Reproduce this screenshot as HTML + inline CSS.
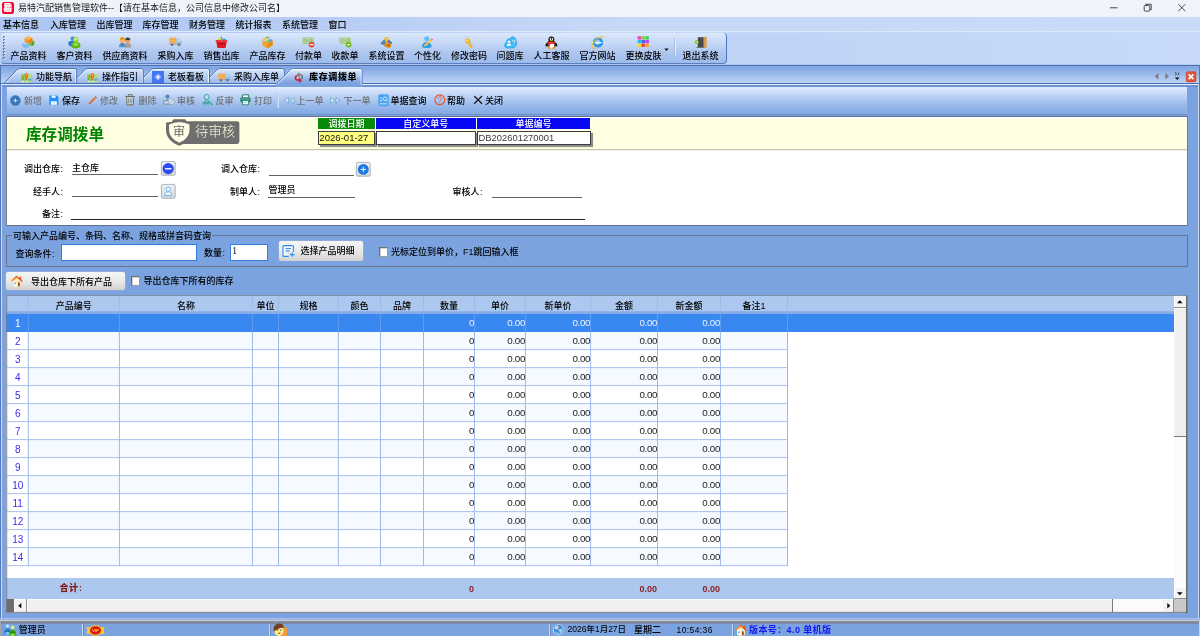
<!DOCTYPE html>
<html lang="zh-CN">
<head>
<meta charset="utf-8">
<title>易特汽配销售管理软件</title>
<style>
html,body{margin:0;padding:0;width:1200px;height:636px;overflow:hidden;background:#7ba3e0}
body{font:500 9px/11px "Liberation Sans","Noto Sans CJK SC",sans-serif;color:#000;position:relative}
#app{position:absolute;left:0;top:0;width:1200px;height:636px;overflow:hidden;will-change:transform}
.a,.t{position:absolute}
.t{white-space:nowrap;height:11px}
svg{position:absolute;overflow:visible}
#title{left:0;top:0;width:1200px;height:17px;background:#f0f3f9}
#menu{left:0;top:17px;width:1200px;height:16px;background:linear-gradient(90deg,#adc6f2 0,#b8cdf5 28%,#c5d7f7 48%,#cadbf8 100%)}
#tbwrap{left:0;top:33px;width:1200px;height:32px;background:linear-gradient(rgba(0,0,0,0) 0,rgba(0,0,0,0) 30.6px,rgba(120,150,210,0.25) 31.4px),linear-gradient(90deg,#bfd3f7 60%,#c8daf8 100%)}
#tb{left:1px;top:0;width:726px;height:31px;box-sizing:border-box;border-radius:3px 4px 4px 3px;background:linear-gradient(#deeafc 0,#d3e1f9 12%,#c7d9f6 32%,#b0c8f0 62%,#9dbbea 100%);border-bottom:1px solid #5a7fc0;border-right:1px solid #4a74c4}
#tb .t{text-align:center}
#tabs{left:0;top:65px;width:1200px;height:18px;background:linear-gradient(#4e70b0 0,#4e70b0 1px,#82a8e2 1px,#86abe3 4px,#a4c1ed 11px,#bad1f5 17px,#c4d8f8 18px)}
#sub{left:7px;top:87px;width:1180px;height:28px;background:linear-gradient(#e3eefd 0,#d2e1f9 3.5px,#c0d5f5 8px,#a8c4ee 14.5px,#8fb2e8 22px,#84aae4 26.9px,#6e8fc6 27px,#6e8fc6 28px)}
.g{color:#6e737a}
.co{display:inline-block;width:4.5px;text-align:left;text-indent:0.6px}
#panel{left:6px;top:116px;width:1182px;height:110px;background:#fff;border:1px solid #7b7d84;border-top-color:#64718c;border-bottom-color:#64718c;box-sizing:border-box}
#yellow{left:0;top:1px;width:1180px;height:33px;background:linear-gradient(#fffff4 0,#fffff4 1px,#ffffe1 1px,#ffffe1 31px,#c6c3b0 31px,#c6c3b0 32px,#f3f2e6 32px)}
.hd{color:#fff;text-align:center;line-height:12.6px;font-size:9px;overflow:hidden}
.in{box-sizing:border-box;border:1px solid #3c3c3c;box-shadow:1.6px 1.6px 0.6px #8f8f8a;line-height:12.4px;font-size:9.6px;padding-left:0.3px;color:#161616;white-space:nowrap}
.ul{position:absolute;height:1px;background:#636363}
.lb{position:absolute;white-space:nowrap;height:11px;text-align:right}
.btn{box-sizing:border-box;background:linear-gradient(#f6f6f6,#e9e9e9 50%,#d2d2d2);border-radius:2px;box-shadow:0 0 0 0.5px #9fb4d8}
.cb{width:9.5px;height:9.5px;box-sizing:border-box;background:#fff;border:1px solid #9a9a9a;border-top-color:#6e6e6e;border-left-color:#6e6e6e;box-shadow:inset 0.6px 0.6px 0 #b0b0b0}
#grid{left:6px;top:295px;width:1182px;height:318px;background:#fff;overflow:hidden}
#gh{left:0;top:0;width:1168px;height:18.7px;background:linear-gradient(#adc8ee 0,#adc8ee 15.6px,#8cb0e8 16.6px,#84aae7 18.7px)}
.h{position:absolute;top:6.1px;height:11px;text-align:center;line-height:11px;font-size:9px}
.row{position:absolute;left:0;width:781.9px;height:18.5px;background:#fff}
.row.alt{background:#f4faff}
.row.sel{background:#3987f0;width:1168px}
.c{position:absolute;top:0;height:18px;text-align:right;line-height:18.6px;color:#1c1c1c;font-size:9.8px;letter-spacing:-0.35px}
.c.n{color:#3a2cf0;text-align:center;font-size:10px;line-height:19.2px;letter-spacing:0;background:#fff}
.row.sel .c{color:#e8f0ff}
.row.sel .c.n{color:#fff;background:none}
#gf{left:0;top:282.9px;width:1168px;height:21.3px;background:#adc8ee}
#status{left:0;top:618px;width:1200px;height:18px;background:linear-gradient(#a6c1ee 0,#a6c1ee 1px,#9bb1d7 1px,#9bb1d7 2px,#c5ccdb 2px,#c5ccdb 3px,#8c8c8c 3px,#8c8c8c 4px,#7588ab 4px,#7588ab 5px,#7f8ba1 5px,#7f8ba1 5.600px,#7ba3e0 6px)}
</style>
</head>
<body>
<div id="app">
<div id="title" class="a">
<div class="a" style="left:1.5px;top:2px;width:12.200px;height:12.200px;border-radius:2.200px;background:#ee0a2c"></div><div class="a" style="left:3.5px;top:4.2px;width:8.200px;height:7.800px;background:rgba(255,255,255,0.5)"></div><div class="t" style="left:3.1px;top:2.6px;font-size:9px;line-height:11px;color:#fff;font-weight:900">易</div>
<div class="t" style="left:18px;top:3px;color:#1a1a1a;font-weight:400">易特汽配销售管理软件--【请在基本信息，公司信息中修改公司名】</div>
<svg style="left:1107px;top:2px" width="90" height="12" viewBox="0 0 90 12"><path d="M3 5.8h7.5" stroke="#333" stroke-width="0.9" fill="none"/><rect x="37.2" y="3.5" width="5.6" height="5.6" rx="1" stroke="#333" stroke-width="0.9" fill="none"/><path d="M38.8 3.3v-1.1h5.4v5.4h-1.2" stroke="#333" stroke-width="0.9" fill="none"/><path d="M71.3 2.2l7 7M78.3 2.2l-7 7" stroke="#333" stroke-width="0.9" fill="none"/></svg>
</div>
<div id="menu" class="a">
<div class="t" style="left:3px;top:3px;">基本信息</div>
<div class="t" style="left:50px;top:3px;">入库管理</div>
<div class="t" style="left:96.5px;top:3px;">出库管理</div>
<div class="t" style="left:142.5px;top:3px;">库存管理</div>
<div class="t" style="left:189px;top:3px;">财务管理</div>
<div class="t" style="left:235.5px;top:3px;">统计报表</div>
<div class="t" style="left:282px;top:3px;">系统管理</div>
<div class="t" style="left:328.5px;top:3px;">窗口</div>
<div class="a" style="left:0;top:14px;width:1200px;height:1px;background:#dfe8f9"></div>
</div>
<div id="tbwrap" class="a"><div id="tb" class="a">
<svg style="left:1.7px;top:2.6px" width="3" height="26" viewBox="0 0 3 26"><rect x="0.2" y="0.20" width="1.5" height="1.5" fill="#2c3f68"/><rect x="1.1" y="1.10" width="1.2" height="1.1" fill="#f4f8ff"/><rect x="0.2" y="3.21" width="1.5" height="1.5" fill="#2c3f68"/><rect x="1.1" y="4.11" width="1.2" height="1.1" fill="#f4f8ff"/><rect x="0.2" y="6.22" width="1.5" height="1.5" fill="#2c3f68"/><rect x="1.1" y="7.12" width="1.2" height="1.1" fill="#f4f8ff"/><rect x="0.2" y="9.23" width="1.5" height="1.5" fill="#2c3f68"/><rect x="1.1" y="10.13" width="1.2" height="1.1" fill="#f4f8ff"/><rect x="0.2" y="12.24" width="1.5" height="1.5" fill="#2c3f68"/><rect x="1.1" y="13.14" width="1.2" height="1.1" fill="#f4f8ff"/><rect x="0.2" y="15.25" width="1.5" height="1.5" fill="#2c3f68"/><rect x="1.1" y="16.15" width="1.2" height="1.1" fill="#f4f8ff"/><rect x="0.2" y="18.26" width="1.5" height="1.5" fill="#2c3f68"/><rect x="1.1" y="19.16" width="1.2" height="1.1" fill="#f4f8ff"/><rect x="0.2" y="21.27" width="1.5" height="1.5" fill="#2c3f68"/><rect x="1.1" y="22.17" width="1.2" height="1.1" fill="#f4f8ff"/></svg>
<div class="t" style="left:9.5px;top:17.7px;width:36px;">产品资料</div>
<svg style="left:21.0px;top:3.2px" width="13" height="13" viewBox="0 0 13 13"><path d="M0.5 7.2l3.6-1.6 3.6 1.5v3.6l-3.6 1.8-3.6-1.7z" fill="#7cbcec"/><path d="M0.5 7.2l3.6 1.5 3.6-1.6-3.6-1.5z" fill="#a6d6f6"/><path d="M7.2 5.2l2.6-1.6 2.4 1.4v3.8l-2.6 1.5-2.4-1.2z" fill="#7fc43a"/><path d="M9.6 6.4l2.6-1.4v3.8l-2.6 1.5z" fill="#5aa21e"/><path d="M2.6 2.2l3.8-1.9 3.9 1.7v4l-3.9 1.8-3.8-1.7z" fill="#f39a22"/><path d="M2.6 2.2l3.8 1.7 3.9-1.9-3.9-1.7z" fill="#fbb85a"/><path d="M6.4 3.9l3.9-1.9v4l-3.9 1.8z" fill="#e8861a"/></svg>
<div class="t" style="left:55.5px;top:17.7px;width:36px;">客户资料</div>
<svg style="left:67.0px;top:3.2px" width="13" height="13" viewBox="0 0 13 13"><circle cx="4.6" cy="2.6" r="2.1" fill="#3d8fe0"/><ellipse cx="3.6" cy="7.6" rx="3.3" ry="2.8" fill="#2d78cf"/><circle cx="7.7" cy="3.7" r="2.7" fill="#8fd43a"/><ellipse cx="7.8" cy="9.3" rx="4.6" ry="3.3" fill="#5cb818"/><ellipse cx="7.7" cy="3.2" rx="1.5" ry="1.2" fill="#c4ee86"/><ellipse cx="7.8" cy="8.4" rx="2.6" ry="1.3" fill="#9fe04e"/></svg>
<div class="t" style="left:101.5px;top:17.7px;width:45px;">供应商资料</div>
<svg style="left:117.5px;top:3.2px" width="13" height="13" viewBox="0 0 13 13"><path d="M0 11.2c0-3 1.4-4.4 3.4-4.4s3.2 1.4 3.2 4.4z" fill="#3f9be8"/><path d="M5.4 11.4c0-3 1.4-4.4 3.4-4.4s3.4 1.4 3.4 4.4z" fill="#9a9a9a"/><circle cx="3.3" cy="4.4" r="2.5" fill="#f6b26a"/><path d="M0.7 4.2c0-2.2 1.2-3.2 2.7-3.2s2.6 1 2.6 2.6c-1.8 0-3.4-0.4-5.3 0.6z" fill="#d8a010"/><circle cx="8.7" cy="4.7" r="2.4" fill="#f39a58"/><path d="M6.2 4.4c0-2 1.2-3 2.6-3s2.6 1 2.6 2.8c-1.8-0.4-3.4-0.6-5.2 0.2z" fill="#333"/><path d="M3 7.2l0.5 3 0.5-3z" fill="#c03030"/><path d="M8.5 7.4l0.5 3 0.5-3z" fill="#e6c820"/></svg>
<div class="t" style="left:156.5px;top:17.7px;width:36px;">采购入库</div>
<svg style="left:168.0px;top:3.2px" width="13" height="13" viewBox="0 0 13 13"><rect x="0.3" y="1.6" width="7.2" height="6.2" rx="0.6" fill="#f6b45c"/><path d="M0.6 3.6h6.6M0.6 5.6h6.6" stroke="#e89a3a" stroke-width="0.5"/><path d="M7.6 2.8h3l1.8 2.6v2.4h-4.8z" fill="#86c0ee"/><path d="M8.6 3.6h1.6l1.2 1.8h-2.8z" fill="#d8ecfb"/><rect x="0.3" y="7.6" width="12.2" height="1" fill="#9aa3ae"/><circle cx="3" cy="8.8" r="1.3" fill="#6b7280"/><circle cx="10" cy="8.8" r="1.3" fill="#6b7280"/></svg>
<div class="t" style="left:202.5px;top:17.7px;width:36px;">销售出库</div>
<svg style="left:214.0px;top:3.2px" width="13" height="13" viewBox="0 0 13 13"><path d="M2 4.4c0.6-2 2-2.6 3.2-2.4l1.4 2.6z" fill="#f4d21c"/><path d="M6.8 4.4c0.4-1.8 2-2.6 4.2-1.2l0.6 1.6z" fill="#2aa6de"/><path d="M0.6 4.8c0-0.6 0.4-0.9 1-0.9h9.8c0.6 0 1 0.3 1 0.9v1.2h-11.8z" fill="#f0323a"/><path d="M1.4 6h10.2l-0.8 5.2c-0.1 0.6-0.5 0.9-1.1 0.9h-6.4c-0.6 0-1-0.3-1.1-0.9z" fill="#e01a24"/><path d="M2.6 7.8h7.8" stroke="#a80c14" stroke-width="1"/><rect x="5.8" y="0.4" width="1.4" height="5.6" rx="0.6" fill="#8a8f98"/></svg>
<div class="t" style="left:248.5px;top:17.7px;width:36px;">产品库存</div>
<svg style="left:260.0px;top:3.2px" width="13" height="13" viewBox="0 0 13 13"><path d="M1.4 4.2l5 2.4 5.2-2.2v5l-5.2 3-5-2.8z" fill="#f2a431"/><path d="M6.4 6.6l5.2-2.2v5l-5.2 3z" fill="#e58e1c"/><path d="M1.2 3.4l2.6-1.3 2.6 1.1-2.6 1.4z" fill="#f8bf3e"/><path d="M3.9 1.6l2.6-1.2 2.6 1.1-2.6 1.3z" fill="#7cc63c"/><path d="M6.6 4.2l2.6-1.3 2.6 1.1-2.6 1.4z" fill="#3aa0ea"/><path d="M3.8 5.4l2.6-1.3 2.6 1.2-2.6 1.4z" fill="#8fd04e"/></svg>
<div class="t" style="left:294.0px;top:17.7px;width:27px;">付款单</div>
<svg style="left:301.0px;top:3.2px" width="13" height="13" viewBox="0 0 13 13"><rect x="0.4" y="1.4" width="11.4" height="6.6" rx="0.8" fill="#a4c98a"/><rect x="1.2" y="2.2" width="9.8" height="5" fill="#b9d8a2"/><circle cx="3.4" cy="4.7" r="1.4" fill="none" stroke="#86ad6c" stroke-width="0.6"/><path d="M6 3.4v2.6M8 3.4h2v2.6h-2z" stroke="#86ad6c" stroke-width="0.6" fill="none"/><circle cx="9.6" cy="8.6" r="2.9" fill="#e84a3a"/><rect x="7.8" y="8.1" width="3.6" height="1.1" fill="#fff"/></svg>
<div class="t" style="left:330.5px;top:17.7px;width:27px;">收款单</div>
<svg style="left:337.5px;top:3.2px" width="13" height="13" viewBox="0 0 13 13"><rect x="0.4" y="1.4" width="11.4" height="6.6" rx="0.8" fill="#a4c98a"/><rect x="1.2" y="2.2" width="9.8" height="5" fill="#b9d8a2"/><circle cx="3.4" cy="4.7" r="1.4" fill="none" stroke="#86ad6c" stroke-width="0.6"/><path d="M6 3.4v2.6M8 3.4h2v2.6h-2z" stroke="#86ad6c" stroke-width="0.6" fill="none"/><circle cx="9.6" cy="8.6" r="2.9" fill="#6cb81e"/><path d="M7.8 7.9h3.6l-1.8 1.9z" fill="#fff"/></svg>
<div class="t" style="left:367.5px;top:17.7px;width:36px;">系统设置</div>
<svg style="left:379.0px;top:3.2px" width="13" height="13" viewBox="0 0 13 13"><path d="M0.4 7.2l6-5.8 6 5.6-2 1.8h-7.6z" fill="#3e6aa8"/><path d="M0.4 7.2l6-5.8v4l-3.4 3.4z" fill="#5a86c0"/><circle cx="6.6" cy="3" r="2.2" fill="#f4c430"/><path d="M5.6 4.6h2l0.6 3.4h-3.2z" fill="#e8a820"/><circle cx="8.6" cy="9.2" r="2.6" fill="#e88a1a"/><circle cx="8.6" cy="9.2" r="1" fill="#8a5a1a"/><path d="M4.4 8.4h3v2.4h-3z" fill="#d88a1a"/></svg>
<div class="t" style="left:413.0px;top:17.7px;width:27px;">个性化</div>
<svg style="left:420.0px;top:3.2px" width="13" height="13" viewBox="0 0 13 13"><circle cx="5.8" cy="2.8" r="2.5" fill="#5cc0f4"/><path d="M1 11c0-3.4 2.2-5 4.8-5s4.8 1.6 4.8 5c-1.6 1.4-8 1.4-9.600 0z" fill="#2f9be8"/><path d="M3.6 8.6l6.200-5.6 1.400 1.400-6.200 5.600-1.800 0.400z" fill="#f4c64a"/><path d="M9.800 3l0.900-0.800 1.400 1.400-0.900 0.800z" fill="#ee6a6a"/></svg>
<div class="t" style="left:450.0px;top:17.7px;width:36px;">修改密码</div>
<svg style="left:461.5px;top:3.2px" width="13" height="13" viewBox="0 0 13 13"><circle cx="3.2" cy="2.600" r="2.200" fill="none" stroke="#c8ccd2" stroke-width="0.9"/><path d="M6.400 4.600l4.800 5.400-0.600 1-1.600-0.400-3.600-4.600z" fill="#c4c8ce"/><path d="M2.200 4.200c0.400-1.800 2.800-2.400 4.200-1.200 1 0.900 1 2.400 0.400 3.400l2.800 5.200-1.400 0.800-1-0.800-0.200-1.400-1.200-0.400-0.600-2c-2-0.200-3.400-1.600-3-3.600z" fill="#f4b41e"/><circle cx="4.200" cy="4.400" r="0.800" fill="#fff4c8"/></svg>
<div class="t" style="left:495.5px;top:17.7px;width:27px;">问题库</div>
<svg style="left:502.5px;top:3.2px" width="13" height="13" viewBox="0 0 13 13"><path d="M3.400 12.400c-2 0-3.200-1.400-3.200-3.200 0-1.400 0.800-2.400 1.800-2.900 0-2.600 1.800-4.300 4-4.300 0.800-1.200 2-1.800 3.200-1.600 2 0.300 3.400 2 3.400 4.200 0.400 0.700 0.600 1.500 0.600 2.400 0 2.800-2 5.400-5 5.400z" fill="#3fb4f2"/><circle cx="5" cy="5.800" r="1.300" fill="#fff"/><path d="M2.800 9.800c0-1.600 1-2.400 2.200-2.400s2.200 0.800 2.200 2.400z" fill="#fff"/><path d="M8.400 5.400c0-1 0.600-1.400 1.300-1.400 0.800 0 1.300 0.500 1.300 1.200 0 1-1.200 1-1.200 2.200" stroke="#fff" stroke-width="0.8" fill="none"/><circle cx="9.800" cy="9" r="0.500" fill="#fff"/></svg>
<div class="t" style="left:532.5px;top:17.7px;width:36px;">人工客服</div>
<svg style="left:544.0px;top:3.2px" width="13" height="13" viewBox="0 0 13 13"><ellipse cx="6.400" cy="8.200" rx="4.400" ry="3.800" fill="#1a1a1a"/><ellipse cx="1.600" cy="8.600" rx="1" ry="2" fill="#1a1a1a" transform="rotate(20 1.600 8.600)"/><ellipse cx="11.200" cy="8.600" rx="1" ry="2" fill="#1a1a1a" transform="rotate(-20 11.200 8.600)"/><ellipse cx="6.400" cy="9" rx="3" ry="3.200" fill="#fff"/><ellipse cx="6.400" cy="3.400" rx="3" ry="3" fill="#1a1a1a"/><path d="M2.600 5.600c2.400 1.200 5.200 1.200 7.600 0l0.400 1.600c-2.800 1.200-5.600 1.200-8.400 0z" fill="#e8281e"/><path d="M3.400 6.800l1.800 0.400-0.400 3.200-1.800-0.400z" fill="#e8281e"/><ellipse cx="5.400" cy="2.900" rx="0.700" ry="1" fill="#fff"/><ellipse cx="7.400" cy="2.900" rx="0.700" ry="1" fill="#fff"/><ellipse cx="6.400" cy="4.700" rx="1.600" ry="0.600" fill="#f4a81e"/><ellipse cx="3.800" cy="12" rx="2" ry="0.900" fill="#f4a81e"/><ellipse cx="9" cy="12" rx="2" ry="0.900" fill="#f4a81e"/></svg>
<div class="t" style="left:578.5px;top:17.7px;width:36px;">官方网站</div>
<svg style="left:590.0px;top:3.2px" width="13" height="13" viewBox="0 0 13 13"><circle cx="7" cy="6.400" r="5" fill="#2a96e8"/><circle cx="7" cy="6.400" r="2.400" fill="#9ad4f8"/><path d="M4 6h6.800v1.600h-6.800z" fill="#e8f6ff"/><path d="M8 7.600h3.800c-0.400 1.600-1.600 3-3.400 3.600z" fill="#2a96e8"/><path d="M1.400 11.800c-1.800-2.400 2.400-8.400 7.600-10.600 1.800-0.800 3.200-0.600 3.600 0.400" stroke="#f4be2a" stroke-width="1.100" fill="none"/><path d="M1.400 11.800c0.800 0.800 2.600 0.400 4-0.400" stroke="#e8a81e" stroke-width="1" fill="none"/></svg>
<div class="t" style="left:624.5px;top:17.7px;width:36px;">更换皮肤</div>
<svg style="left:636.0px;top:3.2px" width="13" height="13" viewBox="0 0 13 13"><rect x="0.6" y="0.2" width="3.500" height="3.300" fill="#ee44c4"/><rect x="4.5" y="0.2" width="3.500" height="3.300" fill="#8ccc2a"/><rect x="8.4" y="0.2" width="3.500" height="3.300" fill="#30d46a"/><rect x="0.6" y="3.9" width="3.500" height="3.300" fill="#2ab8f4"/><rect x="4.5" y="3.9" width="3.500" height="3.300" fill="#4a64e8"/><rect x="8.4" y="3.9" width="3.500" height="3.300" fill="#c43af0"/><rect x="0.6" y="7.6" width="3.500" height="3.300" fill="#f8d432"/><rect x="4.5" y="7.6" width="3.500" height="3.300" fill="#f04a3a"/><rect x="8.4" y="7.6" width="3.500" height="3.300" fill="#f8a828"/></svg>
<div class="t" style="left:681.5px;top:17.7px;width:36px;">退出系统</div>
<svg style="left:693.0px;top:3.2px" width="13" height="13" viewBox="0 0 13 13"><rect x="3.800" y="1.200" width="6" height="10" fill="#4a4a4a"/><path d="M9.800 1.200l2.600-0.800v11l-2.600-0.200z" fill="#d89a48"/><rect x="2.400" y="11" width="8" height="0.900" fill="#6a6a6a"/><path d="M9.800 1.200l2.600-0.800v11l-2.600-0.200z" fill="#d89a48"/><circle cx="2.600" cy="6.200" r="1.900" fill="#7cc81e"/><path d="M1.600 6.200h2.600l-1-1M4.200 6.200l-1 1" stroke="#d8f4a0" stroke-width="0.500" fill="none"/></svg>
<svg style="left:662.6px;top:15.2px" width="6" height="4" viewBox="0 0 6 4"><path d="M0.3 0.5h4.4l-2.2 2.6z" fill="#111"/></svg>
<div class="a" style="left:673px;top:4.5px;width:1px;height:18px;background:#a9bfe6"></div><div class="a" style="left:674px;top:4.5px;width:1px;height:18px;background:#e3ecfb"></div>
</div></div>
<div id="tabs" class="a">
<svg style="left:0px;top:0px" width="1200" height="22" viewBox="0 0 1200 22"><defs><linearGradient id="ti" x1="0" y1="0" x2="0" y2="1"><stop offset="0" stop-color="#dbe7fa"/><stop offset="0.45" stop-color="#bdd2f4"/><stop offset="1" stop-color="#9bb9ea"/></linearGradient><linearGradient id="ta" gradientUnits="userSpaceOnUse" x1="0" y1="3.5" x2="0" y2="22"><stop offset="0" stop-color="#f2f6fe"/><stop offset="0.25" stop-color="#c4d7f6"/><stop offset="0.62" stop-color="#8fb2e7"/><stop offset="0.8" stop-color="#7ba3e0"/><stop offset="1" stop-color="#7ba3e0"/></linearGradient></defs><rect x="0" y="18" width="1200" height="1" fill="#4a70b4"/><rect x="0" y="19" width="1200" height="1" fill="#e2ebfb"/><rect x="0" y="20" width="1200" height="2" fill="#7099da"/><rect x="0" y="21.300" width="1200" height="0.700" fill="#6088cc"/><path d="M204.2 18.0 L216.1 5.6 Q217.5 3.5 220.1 3.5 L282.3 3.5 Q284.3 3.5 284.3 5.5 L284.3 18.0 Z" fill="url(#ti)"/><path d="M205.7 18.0 L216.89999999999998 6.1 Q218.1 4.5 220.1 4.5 L282.3 4.5 Q283.3 4.5 283.3 5.9 L283.3 18.0" fill="none" stroke="#eef4fe" stroke-width="0.9"/><path d="M204.2 18.0 L216.1 5.6 Q217.5 3.5 220.1 3.5 L282.3 3.5 Q284.3 3.5 284.3 5.5 L284.3 18.0" fill="none" stroke="#4a72ba" stroke-width="1"/><path d="M138.2 18.0 L150.1 5.6 Q151.5 3.5 154.1 3.5 L207.5 3.5 Q209.5 3.5 209.5 5.5 L209.5 18.0 Z" fill="url(#ti)"/><path d="M139.7 18.0 L150.89999999999998 6.1 Q152.1 4.5 154.1 4.5 L207.5 4.5 Q208.5 4.5 208.5 5.9 L208.5 18.0" fill="none" stroke="#eef4fe" stroke-width="0.9"/><path d="M138.2 18.0 L150.1 5.6 Q151.5 3.5 154.1 3.5 L207.5 3.5 Q209.5 3.5 209.5 5.5 L209.5 18.0" fill="none" stroke="#4a72ba" stroke-width="1"/><path d="M72.0 18.0 L83.9 5.6 Q85.3 3.5 87.9 3.5 L141.3 3.5 Q143.3 3.5 143.3 5.5 L143.3 18.0 Z" fill="url(#ti)"/><path d="M73.5 18.0 L84.7 6.1 Q85.9 4.5 87.9 4.5 L141.3 4.5 Q142.3 4.5 142.3 5.9 L142.3 18.0" fill="none" stroke="#eef4fe" stroke-width="0.9"/><path d="M72.0 18.0 L83.9 5.6 Q85.3 3.5 87.9 3.5 L141.3 3.5 Q143.3 3.5 143.3 5.5 L143.3 18.0" fill="none" stroke="#4a72ba" stroke-width="1"/><path d="M4.3 18.0 L16.2 5.6 Q17.6 3.5 20.2 3.5 L74.7 3.5 Q76.7 3.5 76.7 5.5 L76.7 18.0 Z" fill="url(#ti)"/><path d="M5.8 18.0 L17.0 6.1 Q18.2 4.5 20.2 4.5 L74.7 4.5 Q75.7 4.5 75.7 5.9 L75.7 18.0" fill="none" stroke="#eef4fe" stroke-width="0.9"/><path d="M4.3 18.0 L16.2 5.6 Q17.6 3.5 20.2 3.5 L74.7 3.5 Q76.7 3.5 76.7 5.5 L76.7 18.0" fill="none" stroke="#4a72ba" stroke-width="1"/><path d="M276.0 22 L276.0 19.6 L289.5 5.6 Q290.90000000000003 3.5 293.5 3.5 L360.2 3.5 Q362.2 3.5 362.2 5.5 L362.2 22 Z" fill="url(#ta)"/><path d="M277.40000000000003 19.4 L290.3 6.1 Q291.5 4.5 293.5 4.5 L360.2 4.5 Q361.2 4.5 361.2 5.9 L361.2 19.4" fill="none" stroke="#fdfeff" stroke-width="0.9"/><path d="M276.20000000000005 19.2 L289.5 5.6 Q290.90000000000003 3.5 293.5 3.5 L360.2 3.5 Q362.2 3.5 362.2 5.5 L362.2 18.6" fill="none" stroke="#5a80c4" stroke-width="1"/></svg>
<div class="t" style="left:36px;top:6.5px;">功能导航</div>
<div class="t" style="left:102px;top:6.5px;">操作指引</div>
<div class="t" style="left:168px;top:6.5px;">老板看板</div>
<div class="t" style="left:234px;top:6.5px;">采购入库单</div>
<div class="t" style="left:309px;top:6.5px;font-weight:900;color:#000;letter-spacing:0.65px">库存调拨单</div>
<svg style="left:20.5px;top:6.5px" width="11" height="11" viewBox="0 0 11 11"><rect x="0.300" y="2.400" width="10.400" height="7.800" rx="0.600" fill="#a8d45a"/><rect x="0.300" y="2.400" width="3.200" height="7.800" fill="#8cc63c"/><rect x="7" y="2.400" width="3.700" height="7.800" fill="#b8de78"/><rect x="6.600" y="6.600" width="4.100" height="2" fill="#58aee8"/><rect x="0.300" y="8.600" width="6.200" height="1.600" fill="#e8ecd8"/><path d="M1.200 8.400l1.400-4M4 9.800l0.800-3.600" stroke="#5a9a2a" stroke-width="0.800"/><path d="M5.400 8l-1.700-3.800c-0.500-1.800 0.500-3.300 1.700-3.300s2.200 1.500 1.700 3.300z" fill="#f06a1e"/><circle cx="5.400" cy="3" r="0.700" fill="#ffd8b0"/></svg>
<svg style="left:86.5px;top:6.5px" width="11" height="11" viewBox="0 0 11 11"><rect x="0.300" y="2.400" width="10.400" height="7.800" rx="0.600" fill="#a8d45a"/><rect x="0.300" y="2.400" width="3.200" height="7.800" fill="#8cc63c"/><rect x="7" y="2.400" width="3.700" height="7.800" fill="#b8de78"/><rect x="6.600" y="6.600" width="4.100" height="2" fill="#58aee8"/><rect x="0.300" y="8.600" width="6.200" height="1.600" fill="#e8ecd8"/><path d="M1.200 8.400l1.400-4M4 9.800l0.800-3.600" stroke="#5a9a2a" stroke-width="0.800"/><path d="M5.400 8l-1.700-3.800c-0.500-1.800 0.500-3.300 1.700-3.300s2.200 1.500 1.700 3.300z" fill="#f06a1e"/><circle cx="5.400" cy="3" r="0.700" fill="#ffd8b0"/></svg>
<svg style="left:152.4px;top:5.5px" width="12" height="12" viewBox="0 0 12 12"><rect x="0" y="0" width="12" height="12" fill="#3f76f6"/><path d="M6 2.200l3.600 3.800-3.600 3.800-3.600-3.800z" fill="#8fb0fb"/><path d="M6 3.800l2 2.200-2 2.200-2-2.200z" fill="#c8d8fe"/><circle cx="6" cy="6" r="0.900" fill="#fff"/></svg>
<svg style="left:218px;top:6px" width="12" height="12" viewBox="0 0 12 12"><rect x="0.300" y="2.400" width="7" height="5.800" rx="0.500" fill="#f6b45c"/><path d="M0.500 4.200h6.600M0.500 6h6.600" stroke="#e89a3a" stroke-width="0.500"/><path d="M7.400 3.400h2.800l1.700 2.400v2.400h-4.500z" fill="#86c0ee"/><path d="M8.300 4.200h1.500l1.100 1.600h-2.600z" fill="#d8ecfb"/><rect x="0.300" y="8" width="11.600" height="0.900" fill="#9aa3ae"/><circle cx="2.900" cy="9.200" r="1.200" fill="#6b7280"/><circle cx="9.600" cy="9.200" r="1.200" fill="#6b7280"/></svg>
<svg style="left:293px;top:5.6px" width="12" height="13" viewBox="0 0 12 13"><path d="M6.400 3.200c2-0.600 3.800 0.600 3.800 2.600 0 1.400-0.800 2.400-2 2.800l-0.400-1.600c0.600-0.300 0.800-0.700 0.800-1.300 0-0.800-0.800-1.300-2.200-1v1.700l-2.800-2.600 2.800-2.800z" fill="#7a7a7a"/><path d="M6 9.800c-2.200 0.600-4.400-0.600-4.400-2.800 0-1.400 0.800-2.600 2-3l0.600 1.600c-0.600 0.300-0.900 0.800-0.900 1.400 0 1 1 1.600 2.700 1.200v-1.800l3 2.800-3 3z" fill="#e01a20"/></svg>
<svg style="left:1150px;top:5px" width="50" height="14" viewBox="0 0 50 14"><path d="M8.400 3v6.600l-3.600-3.300z" fill="#7c7c80"/><path d="M15.400 3v6.600l3.600-3.300z" fill="#7c7c80"/><path d="M25 2.3l1.6 1.5-1.6 1.5M27.6 2.3l1.6 1.5-1.6 1.5" stroke="#222" stroke-width="0.8" fill="none"/><path d="M24.8 7.5h4.8l-2.4 2.4z" fill="#111"/><rect x="36.200" y="1.700" width="9.800" height="10.200" rx="1.200" fill="#e0543a" stroke="#c8432c" stroke-width="0.600"/><path d="M38.6 4.4l4.8 4.8M43.4 4.4l-4.8 4.8" stroke="#fff" stroke-width="1.7" fill="none"/></svg>
</div>
<div class="a" style="left:0;top:65px;width:1px;height:554.5px;background:#5577b5"></div><div class="a" style="left:1px;top:84px;width:1px;height:535px;background:#cddbf5"></div>
<div class="a" style="left:1199px;top:65px;width:1px;height:554.5px;background:#5577b5"></div><div class="a" style="left:1198px;top:84px;width:1px;height:535px;background:#cddbf5"></div>
<div id="sub" class="a">
<div class="t g" style="left:17px;top:9px;">新增</div>
<svg style="left:3.3px;top:7.5px" width="11" height="11" viewBox="0 0 11 11"><circle cx="5.400" cy="5.500" r="5.200" fill="#3576b8"/><circle cx="5.400" cy="5.500" r="4.700" fill="none" stroke="#5a90c8" stroke-width="0.900" stroke-dasharray="1.100 1.100"/><path d="M5.400 3.400v4.200M3.300 5.500h4.200" stroke="#b4d0ee" stroke-width="1.200"/><circle cx="5.400" cy="5.500" r="0.700" fill="#e8f2fc"/></svg>
<div class="t" style="left:55px;top:9px;">保存</div>
<svg style="left:42px;top:8.4px" width="10" height="10" viewBox="0 0 10 10"><path d="M0.300 0.600h7.700l1.400 1.500v7.700h-9.100z" fill="#1e90ff"/><rect x="2.600" y="0.600" width="4" height="2.300" fill="#eaf4ff"/><rect x="1.900" y="6.300" width="5.900" height="3.400" fill="#fff"/><rect x="3" y="7.600" width="3.600" height="0.600" fill="#9ac4f0"/></svg>
<div class="t g" style="left:93px;top:9px;">修改</div>
<svg style="left:80.8px;top:8.7px" width="9.2" height="9.2" viewBox="0 0 11 11"><path d="M1 9.600l0.600-2.200 5.800-5.800 1.800 1.800-5.800 5.800z" fill="#e0703a"/><path d="M7.800 1.200l0.700-0.700c0.300-0.300 0.700-0.300 1 0l0.800 0.800c0.300 0.300 0.300 0.700 0 1l-0.700 0.700z" fill="#c85a28"/><path d="M1 9.600l0.400-1.400 1.100 1.100z" fill="#a8481e"/></svg>
<div class="t g" style="left:131.5px;top:9px;">删除</div>
<svg style="left:118px;top:7.0px" width="11" height="12" viewBox="0 0 11 12"><path d="M3.400 1.900v-1.300h3.600v1.300" stroke="#6a6a5a" stroke-width="0.900" fill="none"/><rect x="0.500" y="1.900" width="9.400" height="1.300" fill="#6a6a5a"/><path d="M1.600 3.400l0.500 7.400h6.200l0.500-7.400" stroke="#6f6f62" stroke-width="1" fill="rgba(255,255,255,0.450)"/><path d="M3.600 4.400v5M5.200 4.400v5M6.800 4.400v5" stroke="#77776a" stroke-width="0.800"/><rect x="2" y="10.400" width="6.400" height="1" fill="#8a8a7a"/></svg>
<div class="t g" style="left:170px;top:9px;">审核</div>
<svg style="left:156px;top:7.2px" width="12" height="11" viewBox="0 0 12 11"><circle cx="4.400" cy="2.500" r="2.100" fill="#5a82bc"/><path d="M3.700 4.200h1.400v2.200h-1.400z" fill="#8a94a8"/><path d="M0.600 6.600h6.800v3.600h-6.800z" fill="rgba(255,255,255,0.250)" stroke="#868b94" stroke-width="0.900"/><circle cx="8.300" cy="7.600" r="2.800" fill="#e8eff8" stroke="#8f99a8" stroke-width="0.700"/><path d="M7.100 8.800l2.300-2.400" stroke="#4a9f84" stroke-width="1"/></svg>
<div class="t g" style="left:208.5px;top:9px;">反审</div>
<svg style="left:195px;top:6.7px" width="11" height="12" viewBox="0 0 11 12"><circle cx="4.600" cy="3" r="2.500" fill="rgba(255,255,255,0.200)" stroke="#2aa898" stroke-width="1"/><path d="M3.600 5.500l-1 2.700h4l-1-2.700" stroke="#2aa898" stroke-width="0.900" fill="none"/><rect x="0.400" y="8.400" width="6.800" height="1.300" fill="#3a9a8a"/><rect x="0.400" y="10.500" width="6.800" height="0.800" fill="#4ab4a4"/><path d="M7 7.400l3.400 3.600" stroke="#2aa898" stroke-width="1.100"/></svg>
<div class="t g" style="left:247px;top:9px;">打印</div>
<svg style="left:233px;top:7.4px" width="11" height="11" viewBox="0 0 11 11"><path d="M2.400 3.400v-2.600h6.200v2.600" stroke="#2a8474" stroke-width="1" fill="#eef6f3"/><rect x="0.300" y="3.200" width="10.400" height="5" rx="1.300" fill="#2f8676"/><rect x="1.600" y="4.300" width="7.800" height="1.300" fill="#5aa696"/><rect x="2.600" y="6.400" width="5.800" height="4.400" fill="#f0f8f6" stroke="#2a8474" stroke-width="0.900"/><path d="M3.800 8.400h3.400" stroke="#6ab0a0" stroke-width="0.600"/></svg>
<div class="t g" style="left:289.5px;top:9px;">上一单</div>
<svg style="left:276.5px;top:7.7px" width="11" height="11" viewBox="0 0 11 11"><path d="M4.600 2.600v5.600l-4-2.800z" fill="#dfeafa" stroke="#6a9ad0" stroke-width="0.700"/><path d="M10 2.600v5.600l-4-2.800z" fill="#dfeafa" stroke="#4ab0a0" stroke-width="0.700"/></svg>
<div class="t g" style="left:336.5px;top:9px;">下一单</div>
<svg style="left:323px;top:7.7px" width="11" height="11" viewBox="0 0 11 11"><path d="M0.600 2.600v5.600l4-2.800z" fill="#dfeafa" stroke="#4ab0a0" stroke-width="0.700"/><path d="M6 2.600v5.600l4-2.800z" fill="#dfeafa" stroke="#4a8ad0" stroke-width="0.700"/></svg>
<div class="t" style="left:383.5px;top:9px;">单据查询</div>
<svg style="left:370.5px;top:7.1px" width="11" height="12" viewBox="0 0 11 12"><rect x="0.300" y="0.200" width="10.600" height="12" rx="1.600" fill="#4aa4f0"/><path d="M1.800 4.200h2.400M1.800 6.600h2.400M1.800 9.800h7.200" stroke="#e8f4ff" stroke-width="0.800"/><circle cx="7.200" cy="4.800" r="1.900" fill="none" stroke="#e8f4ff" stroke-width="0.800"/><path d="M8.400 6.200l1.200 1.400" stroke="#e8f4ff" stroke-width="0.800"/></svg>
<div class="t" style="left:440px;top:9px;">帮助</div>
<svg style="left:426.8px;top:6.8px" width="12" height="12" viewBox="0 0 12 12"><circle cx="5.800" cy="5.800" r="4.900" fill="none" stroke="#f04a1e" stroke-width="1.100"/><path d="M4.200 4.600c0-1.200 0.800-1.700 1.700-1.700s1.600 0.600 1.600 1.500c0 1.200-1.500 1.300-1.500 2.600" stroke="#f04a1e" stroke-width="0.900" fill="none"/><circle cx="5.900" cy="8.400" r="0.600" fill="#f04a1e"/></svg>
<div class="t" style="left:478px;top:9px;">关闭</div>
<svg style="left:465.6px;top:7.9px" width="10" height="10" viewBox="0 0 10 10"><path d="M1.200 1l7.800 7.800M9 1l-7.800 7.800" stroke="#1c1c1c" stroke-width="1.300" fill="none"/></svg>
<div class="a" style="left:269.6px;top:6px;width:1px;height:15px;background:#b4c8ec"></div><div class="a" style="left:270.6px;top:6px;width:1px;height:15px;background:#d3e0f6"></div>
</div>
<div id="panel" class="a"><div id="yellow" class="a"></div>
<div class="t" style="left:19px;top:9px;font-size:15.6px;line-height:17px;height:17px;font-weight:bold;color:#008400">库存调拨单</div>
<svg style="left:158.8px;top:2px" width="74" height="27" viewBox="0 0 74 27"><rect x="13" y="2.2" width="60.4" height="22.8" rx="2.4" fill="#6e6e6e"/><path d="M7.400 0.300L19.200 0.300L20.800 2.800Q23.600 3.400 26.600 3.400L26.600 11C26.600 18 21.600 23.500 13.300 26.700C5 23.500 0 18 0 11L0 3.400Q3 3.400 5.800 2.800Z" fill="#6e6e6e"/><path d="M13.300 3Q18.400 3.400 23.500 5.600L23.500 11C23.500 16.800 19.400 21 13.300 23.700C7.200 21 3.100 16.800 3.100 11L3.100 5.600Q8.200 3.400 13.300 3Z" fill="#fffce6"/></svg><div class="t" style="left:166.10000000000002px;top:8.3px;font-size:12px;line-height:14px;height:14px;color:#6a6a6a;font-weight:400">审</div><div class="t" style="left:188.0px;top:7.2px;font-size:13.400px;line-height:16px;height:16px;color:#fffbdc;font-weight:300">待审核</div>
<div class="a hd" style="left:311px;top:0.6px;width:56.8px;height:11.3px;background:#0a8a0a">调拨日期</div>
<div class="a hd" style="left:369px;top:0.6px;width:99.5px;height:11.3px;background:#0808f4">自定义单号</div>
<div class="a hd" style="left:470.3px;top:0.6px;width:112.5px;height:11.3px;background:#0808f4">单据编号</div>
<div class="a in" style="left:311px;top:14.2px;width:57px;height:14.2px;background:#ffff80">2026-01-27</div>
<div class="a in" style="left:369.3px;top:14.2px;width:99.5px;height:14.2px;background:#fff"></div>
<div class="a in" style="left:470.3px;top:13.6px;width:113.5px;height:14.2px;background:#fff;font-size:9.4px;color:#3c3c3c;line-height:11.6px">DB202601270001</div>
<div class="lb" style="left:-22.5px;width:80px;top:47.2px">调出仓库<span class="co">:</span></div>
<div class="t" style="left:65px;top:46.2px;">主仓库</div>
<div class="ul" style="left:65px;top:57px;width:86px;height:1.2px"></div>
<svg style="left:154.2px;top:44px" width="14.6" height="14.6" viewBox="0 0 14.6 14.6"><defs><linearGradient id="sq1" x1="0" y1="0" x2="0" y2="1"><stop offset="0" stop-color="#f0f0f0"/><stop offset="1" stop-color="#d9d9d9"/></linearGradient></defs><rect x="0.400" y="0.400" width="13.800" height="13.800" rx="1.400" fill="url(#sq1)" stroke="#9aa3b0" stroke-width="0.800"/><circle cx="7.200" cy="7.600" r="5.600" fill="#2a4cf0"/><rect x="3.800" y="6.900" width="6.800" height="1.500" rx="0.700" fill="#e4ebff"/></svg>
<div class="lb" style="left:174.5px;width:80px;top:47px">调入仓库<span class="co">:</span></div>
<div class="ul" style="left:262px;top:57.5px;width:85px"></div>
<svg style="left:348.6px;top:44.8px" width="14.6" height="14.6" viewBox="0 0 14.6 14.6"><defs><linearGradient id="sq2" x1="0" y1="0" x2="0" y2="1"><stop offset="0" stop-color="#f0f0f0"/><stop offset="1" stop-color="#d9d9d9"/></linearGradient></defs><rect x="0.400" y="0.400" width="13.800" height="13.800" rx="1.400" fill="url(#sq2)" stroke="#9aa3b0" stroke-width="0.800"/><circle cx="7.300" cy="7.400" r="5.400" fill="#1a78e0"/><path d="M7.300 4.600v5.600M4.500 7.400h5.600" stroke="#eef5ff" stroke-width="1"/></svg>
<div class="lb" style="left:-22.5px;width:80px;top:69.5px">经手人<span class="co">:</span></div>
<div class="ul" style="left:65px;top:79px;width:86px;height:1.2px"></div>
<svg style="left:154.2px;top:66.7px" width="14.6" height="14.6" viewBox="0 0 14.6 14.6"><defs><linearGradient id="sq3" x1="0" y1="0" x2="0" y2="1"><stop offset="0" stop-color="#f0f0f0"/><stop offset="1" stop-color="#d9d9d9"/></linearGradient></defs><rect x="0.400" y="0.400" width="13.800" height="13.800" rx="1.400" fill="url(#sq3)" stroke="#9aa3b0" stroke-width="0.800"/><circle cx="7.300" cy="5.300" r="2.200" fill="#f4f8fc" stroke="#5ab0f0" stroke-width="0.900"/><path d="M3.600 11.600c0-2.600 1.400-3.800 3.700-3.800s3.700 1.200 3.700 3.800z" fill="#f4f8fc" stroke="#5ab0f0" stroke-width="0.900"/></svg>
<div class="lb" style="left:174.5px;width:80px;top:69.5px">制单人<span class="co">:</span></div>
<div class="t" style="left:261.5px;top:68px;">管理员</div>
<div class="ul" style="left:261px;top:79.5px;width:87px"></div>
<div class="lb" style="left:397px;width:80px;top:69.7px">审核人<span class="co">:</span></div>
<div class="ul" style="left:484.5px;top:79.5px;width:90px"></div>
<div class="lb" style="left:-22.5px;width:80px;top:92px">备注<span class="co">:</span></div>
<div class="ul" style="left:63.5px;top:102px;width:514px;background:#222"></div>
</div>
<div class="a" style="left:6px;top:235px;width:1181.5px;height:31.5px;box-sizing:border-box;border:1px solid #6a7389"></div>
<div class="a" style="left:12px;top:233px;width:200px;height:5px;background:#7ba3e0"></div>
<div class="t" style="left:13px;top:231px;">可输入产品编号、条码、名称、规格或拼音码查询</div>
<div class="t" style="left:15.5px;top:249px;">查询条件<span class="co">:</span></div>
<div class="a" style="left:60.5px;top:244px;width:136px;height:16.5px;box-sizing:border-box;border:1px solid #2f80e0;background:#fff"></div>
<div class="t" style="left:204px;top:247.8px;">数量<span class="co">:</span></div>
<div class="a" style="left:230px;top:244px;width:37.5px;height:16.5px;box-sizing:border-box;border:1px solid #2f80e0;background:#fff"></div>
<div class="t" style="left:232.3px;top:246px;font-family:'Liberation Serif',serif;font-size:9.5px;color:#000;font-weight:400">1</div>
<div class="a btn" style="left:278.5px;top:240.5px;width:84.5px;height:20px"></div>
<svg style="left:283px;top:245px" width="12" height="12" viewBox="0 0 12 12"><path d="M1 0.600h8.400c0.600 0 1 0.400 1 1v5.400M5.600 11.400h-4.600c-0.600 0-1-0.400-1-1v-8.800c0-0.600 0.400-1 1-1" stroke="#2a8cf0" stroke-width="1.100" fill="#f4f8ff"/><path d="M2.600 3.600h5.400M2.600 6h4" stroke="#2a8cf0" stroke-width="1"/><path d="M9.200 7.400v4.400M7 9.600h4.400" stroke="#2a8cf0" stroke-width="1.100"/></svg>
<div class="t" style="left:300.5px;top:245.5px;">选择产品明细</div>
<div class="a cb" style="left:378.5px;top:247px"></div>
<div class="t" style="left:391px;top:247px;">光标定位到单价，F1跳回输入框</div>
<div class="a btn" style="left:6px;top:271.5px;width:118.5px;height:18px"></div>
<svg style="left:10.5px;top:275px" width="12" height="12" viewBox="0 0 12 12"><path d="M0.200 5.800l5.400-5.200 3 2.600 0.200-1.600 1.400 0.200v2.800l1.600 1.600-1 0.600z" fill="#e8501a"/><path d="M5.600 0.600l-5.400 5.200 1 0.400 4.600-3.800z" fill="#f4902a"/><path d="M2 5.800l3.800-3.200 4.200 3.600v4.600l-4 1.200-4-1.200z" fill="#f8e8c0"/><path d="M6 12v-5.400l-4-0.800v5z" fill="#fdf4dc"/><rect x="7" y="7.400" width="1.800" height="3.800" fill="#a8481e"/><rect x="3" y="7.400" width="1.800" height="1.800" fill="#8ab8e0"/></svg>
<div class="t" style="left:31px;top:276.5px;">导出仓库下所有产品</div>
<div class="a cb" style="left:130.5px;top:276px"></div>
<div class="t" style="left:143.5px;top:276px;">导出仓库下所有的库存</div>
<div id="grid" class="a">
<div id="gh" class="a"></div>
<div class="h" style="left:22.3px;width:91.1px">产品编号</div>
<div class="h" style="left:113.4px;width:133.0px">名称</div>
<div class="h" style="left:246.4px;width:26.1px">单位</div>
<div class="h" style="left:272.5px;width:59.8px">规格</div>
<div class="h" style="left:332.3px;width:42.2px">颜色</div>
<div class="h" style="left:374.5px;width:43.0px">品牌</div>
<div class="h" style="left:417.5px;width:51.0px">数量</div>
<div class="h" style="left:468.5px;width:50.9px">单价</div>
<div class="h" style="left:519.4px;width:65.2px">新单价</div>
<div class="h" style="left:584.6px;width:66.9px">金额</div>
<div class="h" style="left:651.5px;width:62.9px">新金额</div>
<div class="h" style="left:714.4px;width:67.1px">备注1</div>
<div class="row sel" style="top:18.65px">
<div class="c n" style="left:1.2px;width:21.1px">1</div>
<div class="c" style="left:417.5px;width:50.6px">0</div>
<div class="c" style="left:468.5px;width:50.5px">0.00</div>
<div class="c" style="left:519.4px;width:64.8px">0.00</div>
<div class="c" style="left:584.6px;width:66.5px">0.00</div>
<div class="c" style="left:651.5px;width:62.5px">0.00</div>
</div>
<div class="row alt" style="top:36.65px">
<div class="c n" style="left:1.2px;width:21.1px">2</div>
<div class="c" style="left:417.5px;width:50.6px">0</div>
<div class="c" style="left:468.5px;width:50.5px">0.00</div>
<div class="c" style="left:519.4px;width:64.8px">0.00</div>
<div class="c" style="left:584.6px;width:66.5px">0.00</div>
<div class="c" style="left:651.5px;width:62.5px">0.00</div>
</div>
<div class="row" style="top:54.65px">
<div class="c n" style="left:1.2px;width:21.1px">3</div>
<div class="c" style="left:417.5px;width:50.6px">0</div>
<div class="c" style="left:468.5px;width:50.5px">0.00</div>
<div class="c" style="left:519.4px;width:64.8px">0.00</div>
<div class="c" style="left:584.6px;width:66.5px">0.00</div>
<div class="c" style="left:651.5px;width:62.5px">0.00</div>
</div>
<div class="row alt" style="top:72.65px">
<div class="c n" style="left:1.2px;width:21.1px">4</div>
<div class="c" style="left:417.5px;width:50.6px">0</div>
<div class="c" style="left:468.5px;width:50.5px">0.00</div>
<div class="c" style="left:519.4px;width:64.8px">0.00</div>
<div class="c" style="left:584.6px;width:66.5px">0.00</div>
<div class="c" style="left:651.5px;width:62.5px">0.00</div>
</div>
<div class="row" style="top:90.65px">
<div class="c n" style="left:1.2px;width:21.1px">5</div>
<div class="c" style="left:417.5px;width:50.6px">0</div>
<div class="c" style="left:468.5px;width:50.5px">0.00</div>
<div class="c" style="left:519.4px;width:64.8px">0.00</div>
<div class="c" style="left:584.6px;width:66.5px">0.00</div>
<div class="c" style="left:651.5px;width:62.5px">0.00</div>
</div>
<div class="row alt" style="top:108.65px">
<div class="c n" style="left:1.2px;width:21.1px">6</div>
<div class="c" style="left:417.5px;width:50.6px">0</div>
<div class="c" style="left:468.5px;width:50.5px">0.00</div>
<div class="c" style="left:519.4px;width:64.8px">0.00</div>
<div class="c" style="left:584.6px;width:66.5px">0.00</div>
<div class="c" style="left:651.5px;width:62.5px">0.00</div>
</div>
<div class="row" style="top:126.65px">
<div class="c n" style="left:1.2px;width:21.1px">7</div>
<div class="c" style="left:417.5px;width:50.6px">0</div>
<div class="c" style="left:468.5px;width:50.5px">0.00</div>
<div class="c" style="left:519.4px;width:64.8px">0.00</div>
<div class="c" style="left:584.6px;width:66.5px">0.00</div>
<div class="c" style="left:651.5px;width:62.5px">0.00</div>
</div>
<div class="row alt" style="top:144.65px">
<div class="c n" style="left:1.2px;width:21.1px">8</div>
<div class="c" style="left:417.5px;width:50.6px">0</div>
<div class="c" style="left:468.5px;width:50.5px">0.00</div>
<div class="c" style="left:519.4px;width:64.8px">0.00</div>
<div class="c" style="left:584.6px;width:66.5px">0.00</div>
<div class="c" style="left:651.5px;width:62.5px">0.00</div>
</div>
<div class="row" style="top:162.65px">
<div class="c n" style="left:1.2px;width:21.1px">9</div>
<div class="c" style="left:417.5px;width:50.6px">0</div>
<div class="c" style="left:468.5px;width:50.5px">0.00</div>
<div class="c" style="left:519.4px;width:64.8px">0.00</div>
<div class="c" style="left:584.6px;width:66.5px">0.00</div>
<div class="c" style="left:651.5px;width:62.5px">0.00</div>
</div>
<div class="row alt" style="top:180.65px">
<div class="c n" style="left:1.2px;width:21.1px">10</div>
<div class="c" style="left:417.5px;width:50.6px">0</div>
<div class="c" style="left:468.5px;width:50.5px">0.00</div>
<div class="c" style="left:519.4px;width:64.8px">0.00</div>
<div class="c" style="left:584.6px;width:66.5px">0.00</div>
<div class="c" style="left:651.5px;width:62.5px">0.00</div>
</div>
<div class="row" style="top:198.65px">
<div class="c n" style="left:1.2px;width:21.1px">11</div>
<div class="c" style="left:417.5px;width:50.6px">0</div>
<div class="c" style="left:468.5px;width:50.5px">0.00</div>
<div class="c" style="left:519.4px;width:64.8px">0.00</div>
<div class="c" style="left:584.6px;width:66.5px">0.00</div>
<div class="c" style="left:651.5px;width:62.5px">0.00</div>
</div>
<div class="row alt" style="top:216.65px">
<div class="c n" style="left:1.2px;width:21.1px">12</div>
<div class="c" style="left:417.5px;width:50.6px">0</div>
<div class="c" style="left:468.5px;width:50.5px">0.00</div>
<div class="c" style="left:519.4px;width:64.8px">0.00</div>
<div class="c" style="left:584.6px;width:66.5px">0.00</div>
<div class="c" style="left:651.5px;width:62.5px">0.00</div>
</div>
<div class="row" style="top:234.65px">
<div class="c n" style="left:1.2px;width:21.1px">13</div>
<div class="c" style="left:417.5px;width:50.6px">0</div>
<div class="c" style="left:468.5px;width:50.5px">0.00</div>
<div class="c" style="left:519.4px;width:64.8px">0.00</div>
<div class="c" style="left:584.6px;width:66.5px">0.00</div>
<div class="c" style="left:651.5px;width:62.5px">0.00</div>
</div>
<div class="row alt" style="top:252.65px">
<div class="c n" style="left:1.2px;width:21.1px">14</div>
<div class="c" style="left:417.5px;width:50.6px">0</div>
<div class="c" style="left:468.5px;width:50.5px">0.00</div>
<div class="c" style="left:519.4px;width:64.8px">0.00</div>
<div class="c" style="left:584.6px;width:66.5px">0.00</div>
<div class="c" style="left:651.5px;width:62.5px">0.00</div>
</div>
<svg style="left:0;top:0" width="800" height="290" viewBox="0 0 800 290"><rect x="21.85" y="0.7" width="0.9" height="15.75" fill="#9cb9eb"/><rect x="21.85" y="18.65" width="0.9" height="18.00" fill="#629ff3"/><rect x="21.85" y="36.65" width="0.9" height="234.40" fill="#96b3e8"/><rect x="112.95" y="0.7" width="0.9" height="15.75" fill="#9cb9eb"/><rect x="112.95" y="18.65" width="0.9" height="18.00" fill="#629ff3"/><rect x="112.95" y="36.65" width="0.9" height="234.40" fill="#96b3e8"/><rect x="245.95" y="0.7" width="0.9" height="15.75" fill="#9cb9eb"/><rect x="245.95" y="18.65" width="0.9" height="18.00" fill="#629ff3"/><rect x="245.95" y="36.65" width="0.9" height="234.40" fill="#96b3e8"/><rect x="272.05" y="0.7" width="0.9" height="15.75" fill="#9cb9eb"/><rect x="272.05" y="18.65" width="0.9" height="18.00" fill="#629ff3"/><rect x="272.05" y="36.65" width="0.9" height="234.40" fill="#96b3e8"/><rect x="331.85" y="0.7" width="0.9" height="15.75" fill="#9cb9eb"/><rect x="331.85" y="18.65" width="0.9" height="18.00" fill="#629ff3"/><rect x="331.85" y="36.65" width="0.9" height="234.40" fill="#96b3e8"/><rect x="374.05" y="0.7" width="0.9" height="15.75" fill="#9cb9eb"/><rect x="374.05" y="18.65" width="0.9" height="18.00" fill="#629ff3"/><rect x="374.05" y="36.65" width="0.9" height="234.40" fill="#96b3e8"/><rect x="417.05" y="0.7" width="0.9" height="15.75" fill="#9cb9eb"/><rect x="417.05" y="18.65" width="0.9" height="18.00" fill="#629ff3"/><rect x="417.05" y="36.65" width="0.9" height="234.40" fill="#96b3e8"/><rect x="468.05" y="0.7" width="0.9" height="15.75" fill="#9cb9eb"/><rect x="468.05" y="18.65" width="0.9" height="18.00" fill="#629ff3"/><rect x="468.05" y="36.65" width="0.9" height="234.40" fill="#96b3e8"/><rect x="518.95" y="0.7" width="0.9" height="15.75" fill="#9cb9eb"/><rect x="518.95" y="18.65" width="0.9" height="18.00" fill="#629ff3"/><rect x="518.95" y="36.65" width="0.9" height="234.40" fill="#96b3e8"/><rect x="584.15" y="0.7" width="0.9" height="15.75" fill="#9cb9eb"/><rect x="584.15" y="18.65" width="0.9" height="18.00" fill="#629ff3"/><rect x="584.15" y="36.65" width="0.9" height="234.40" fill="#96b3e8"/><rect x="651.05" y="0.7" width="0.9" height="15.75" fill="#9cb9eb"/><rect x="651.05" y="18.65" width="0.9" height="18.00" fill="#629ff3"/><rect x="651.05" y="36.65" width="0.9" height="234.40" fill="#96b3e8"/><rect x="713.95" y="0.7" width="0.9" height="15.75" fill="#9cb9eb"/><rect x="713.95" y="18.65" width="0.9" height="18.00" fill="#629ff3"/><rect x="713.95" y="36.65" width="0.9" height="234.40" fill="#96b3e8"/><rect x="781.05" y="0.7" width="0.9" height="15.75" fill="#9cb9eb"/><rect x="781.05" y="18.65" width="0.9" height="18.00" fill="#629ff3"/><rect x="781.05" y="36.65" width="0.9" height="234.40" fill="#96b3e8"/><rect x="1.2" y="54.20" width="780.75" height="0.9" fill="#9ebaea"/><rect x="1.2" y="72.20" width="780.75" height="0.9" fill="#9ebaea"/><rect x="1.2" y="90.20" width="780.75" height="0.9" fill="#9ebaea"/><rect x="1.2" y="108.20" width="780.75" height="0.9" fill="#9ebaea"/><rect x="1.2" y="126.20" width="780.75" height="0.9" fill="#9ebaea"/><rect x="1.2" y="144.20" width="780.75" height="0.9" fill="#9ebaea"/><rect x="1.2" y="162.20" width="780.75" height="0.9" fill="#9ebaea"/><rect x="1.2" y="180.20" width="780.75" height="0.9" fill="#9ebaea"/><rect x="1.2" y="198.20" width="780.75" height="0.9" fill="#9ebaea"/><rect x="1.2" y="216.20" width="780.75" height="0.9" fill="#9ebaea"/><rect x="1.2" y="234.20" width="780.75" height="0.9" fill="#9ebaea"/><rect x="1.2" y="252.20" width="780.75" height="0.9" fill="#9ebaea"/><rect x="1.2" y="270.20" width="780.75" height="0.9" fill="#9ebaea"/></svg>
<div id="gf" class="a">
<div class="t" style="left:53.5px;top:5.6px;color:#8b1818;font-weight:900;letter-spacing:0.5px">合计<span class="co">:</span></div>
<div class="lb" style="left:408.0px;width:60px;top:6.6px;color:#8c2222;font-weight:bold;font-size:9px">0</div>
<div class="lb" style="left:591.0px;width:60px;top:6.6px;color:#8c2222;font-weight:bold;font-size:9px">0.00</div>
<div class="lb" style="left:654.0px;width:60px;top:6.6px;color:#8c2222;font-weight:bold;font-size:9px">0.00</div>
</div>
<div class="a" style="left:1168px;top:0.4px;width:12px;height:303.8px;background:#fbfbfb"></div><div class="a" style="left:1168px;top:0.4px;width:12px;height:12.2px;background:#f3f3f3;box-shadow:inset 0 -1px 0 #8e8e8e,inset 1px 1px 0 #fff"></div><div class="a" style="left:1168px;top:12.6px;width:12px;height:129.6px;background:#efefef;box-shadow:inset 0 -1px 0 #7a7a7a,inset 1px 1px 0 #fafafa"></div><div class="a" style="left:1168px;top:292.0px;width:12px;height:12.2px;background:#f3f3f3;box-shadow:inset 0 -1px 0 #8e8e8e,inset 1px 1px 0 #fff"></div><svg style="left:1171.3px;top:4.6px" width="6" height="4" viewBox="0 0 6 4"><path d="M0 3.300h5.600l-2.800-3z" fill="#000"/></svg><svg style="left:1171.3px;top:296.59999999999997px" width="6" height="4" viewBox="0 0 6 4"><path d="M0 0.300h5.600l-2.800 3z" fill="#000"/></svg><div class="a" style="left:1180px;top:0;width:2px;height:318px;background:linear-gradient(90deg,#6b6b6b 0,#6b6b6b 1px,#7d8698 1px)"></div><div class="a" style="left:0.9px;top:304.2px;width:1167.1px;height:12.7px;background:#fbfbfb"></div><div class="a" style="left:0.3px;top:304.2px;width:7.700px;height:12.7px;background:#6e6e6e"></div><div class="a" style="left:8px;top:304.2px;width:12.600px;height:12.7px;background:#f3f3f3;box-shadow:inset -1px 0 0 #8e8e8e,inset 1px 1px 0 #fff"></div><div class="a" style="left:20.600px;top:304.2px;width:1086.800px;height:12.7px;background:#efefef;box-shadow:inset -1px 0 0 #7a7a7a,inset 1px 1px 0 #fafafa"></div><div class="a" style="left:1155.8px;top:304.2px;width:12.200px;height:12.7px;background:#f3f3f3;box-shadow:inset -1px 0 0 #8e8e8e,inset 1px 1px 0 #fff"></div><div class="a" style="left:1168px;top:304.2px;width:12px;height:12.7px;background:#c8c8c8"></div><svg style="left:11.8px;top:307.5px" width="4" height="6" viewBox="0 0 4 6"><path d="M3.300 0v5.600l-3-2.800z" fill="#000"/></svg><svg style="left:1160.7px;top:307.5px" width="4" height="6" viewBox="0 0 4 6"><path d="M0.300 0v5.600l3-2.800z" fill="#000"/></svg>
<svg style="left:0;top:0" width="1182" height="318" viewBox="0 0 1182 318"><rect x="0.3" y="0.2" width="0.9" height="317.6" fill="#757a86"/><rect x="0.3" y="0.1" width="1181.5" height="0.9" fill="#7d879d"/><rect x="0.3" y="316.9" width="1181.5" height="0.9" fill="#6e6e6e"/></svg>
</div>
<div id="status" class="a">
<div class="a" style="left:82px;top:5.6px;width:1px;height:13px;background:#c6d6f3"></div><div class="a" style="left:83.4px;top:5.6px;width:1px;height:13px;background:#7388ad"></div><div class="a" style="left:269px;top:5.6px;width:1px;height:13px;background:#c6d6f3"></div><div class="a" style="left:270.4px;top:5.6px;width:1px;height:13px;background:#7388ad"></div><div class="a" style="left:549px;top:5.6px;width:1px;height:13px;background:#c6d6f3"></div><div class="a" style="left:550.4px;top:5.6px;width:1px;height:13px;background:#7388ad"></div><div class="a" style="left:731.5px;top:5.6px;width:1px;height:13px;background:#c6d6f3"></div><div class="a" style="left:732.9px;top:5.6px;width:1px;height:13px;background:#7388ad"></div><svg style="left:4.3px;top:6px" width="13" height="12" viewBox="0 0 13 12"><circle cx="3.600" cy="2.100" r="1.900" fill="#8fd4f4"/><circle cx="3.600" cy="1.700" r="1" fill="#e4f6ff"/><path d="M0.200 10.600c0-4.600 1.300-6.400 3.400-6.400s3.300 1.800 3.300 6.400z" fill="#2a86d8"/><path d="M0.800 6.200h5.600v1.600h-5.600z" fill="#1868b8"/><path d="M1.200 10.800c0-2 1-3 2.400-3s2.200 1 2.200 3z" fill="#7cc8f0"/><circle cx="8.600" cy="3.600" r="2" fill="#b8ec6a"/><circle cx="8.600" cy="3.200" r="1" fill="#ecffc8"/><path d="M5.200 12c0-4.600 1.400-6.200 3.500-6.200s3.500 1.600 3.500 6.200z" fill="#3ca818"/><path d="M6.400 7.600h4.800v1.500h-4.800z" fill="#1e8808"/><path d="M6.400 12c0-1.800 1-2.600 2.300-2.600s2.300 0.800 2.300 2.600z" fill="#8ee04a"/></svg><svg style="left:86px;top:6.6px" width="19" height="11" viewBox="0 0 19 11"><path d="M0.300 2.200h4v6.600h-4l1.200-3.300zM18.700 2.200h-4v6.600h4l-1.200-3.300z" fill="#f8d232"/><ellipse cx="9.500" cy="5.400" rx="6.600" ry="5.300" fill="#f4c020"/><ellipse cx="9.500" cy="5.400" rx="5.500" ry="4.200" fill="#de1212"/><text x="9.500" y="6.900" font-size="4.400" font-weight="bold" fill="#ffd84a" text-anchor="middle" font-family="Liberation Sans, sans-serif">VIP</text></svg><svg style="left:272.5px;top:4.6px" width="16" height="14" viewBox="0 0 16 14"><rect x="9" y="4.400" width="5.800" height="9.400" fill="#f08a28"/><path d="M10 6h3.800M10 8h3.800M10 10h3.800M10 12h3.800" stroke="#f8b868" stroke-width="0.700"/><ellipse cx="6" cy="8" rx="4.600" ry="4.900" fill="#fff27c"/><path d="M0.800 8.400c-0.800-4.800 1.600-7.600 5-7.800 3-0.200 5 1.400 5 4.200-2.200-0.400-3.600 0-5.200 1-1.400 0.800-2.800 1.600-4.800 2.600z" fill="#7c3c1c"/><circle cx="4.800" cy="7" r="0.700" fill="#2a4aa8"/><circle cx="7.800" cy="7" r="0.700" fill="#2a4aa8"/><ellipse cx="6.200" cy="10.200" rx="1.300" ry="0.700" fill="#f02a5a"/></svg><svg style="left:553px;top:5.8px" width="11" height="11" viewBox="0 0 11 11"><circle cx="5.300" cy="5.500" r="5.300" fill="#cfd6e2"/><circle cx="5.300" cy="5.500" r="4.500" fill="#2f8be0"/><path d="M2 3.200c1.200-1.200 2.600-1.600 3.600-1.200 0.200 1.200-0.400 2.400-1.400 3.200-1 0.600-2 0.200-2.600-0.400z" fill="#bfe4f8"/><path d="M6.400 4.800c1-0.400 2.200 0 3 0.800-0.200 1.600-1 2.800-2.400 3.600-0.800-1.200-1-2.800-0.600-4.400z" fill="#9fd4f4"/><path d="M2.400 7.400c0.800 1.400 2 2.200 3.400 2.400l-0.600-1.800z" fill="#7cc4f0"/><path d="M5.300 5.800l1.500-3.400" stroke="#e8483a" stroke-width="0.800"/><circle cx="5.300" cy="5.800" r="0.600" fill="#f4f8fc"/></svg><svg style="left:735px;top:5.8px" width="12" height="12" viewBox="0 0 12 12"><path d="M0.200 5.800l5.400-5.200 3 2.600 0.200-1.600 1.400 0.200v2.800l1.600 1.600-1 0.600z" fill="#e8501a"/><path d="M5.600 0.600l-5.400 5.200 1 0.400 4.600-3.800z" fill="#f4902a"/><path d="M2 5.800l3.800-3.200 4.200 3.600v4.600l-4 1.200-4-1.200z" fill="#f8e8c0"/><path d="M6 12v-5.400l-4-0.800v5z" fill="#fdf4dc"/><rect x="7" y="7.400" width="1.800" height="3.800" fill="#a8481e"/><rect x="3" y="7.400" width="1.800" height="1.800" fill="#8ab8e0"/></svg>
<div class="t" style="left:18.8px;top:7.2px;">管理员</div>
<div class="t" style="left:567.5px;top:6px;font-size:8.5px">2026年1月27日</div>
<div class="t" style="left:634px;top:7.3px;">星期二</div>
<div class="t" style="left:676.5px;top:6.5px;font-size:8.5px;letter-spacing:0.4px">10:54:36</div>
<div class="t" style="left:749px;top:7px;color:#1414f0;font-weight:bold;letter-spacing:0.4px">版本号：4.0 单机版</div>
<div class="a" style="left:0;top:3px;width:1px;height:15px;background:#a2a2a2"></div>
<div class="a" style="left:2.6px;top:5px;width:1px;height:13px;background:#8292ae"></div>
<div class="a" style="left:1199px;top:3px;width:1px;height:15px;background:#d0d4da"></div>
</div>
</div>
</body>
</html>
